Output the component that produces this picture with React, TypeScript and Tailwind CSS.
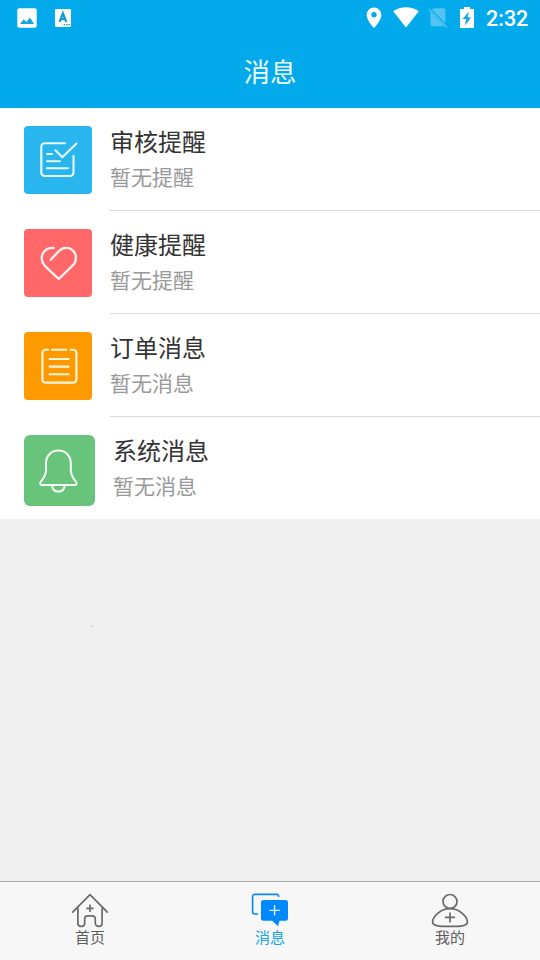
import type { ReactNode } from "react";

type Message = {
  id: number;
  title: string;
  desc: string;
  tile: string;
  icon: ReactNode;
};

const messages: Message[] = [
  {
    id: 1,
    title: "审核提醒",
    desc: "暂无提醒",
    tile: "size-[68px] rounded-[4px] bg-[#29b6ee]",
    icon: (
      <svg viewBox="0 0 68 68" className="size-full" fill="none" stroke="#e9fbff" strokeWidth="2.1" strokeLinecap="round" strokeLinejoin="round">
        <path d="M41 17.2H20.5a3.2 3.2 0 0 0-3.2 3.2v26.4a3.2 3.2 0 0 0 3.2 3.2h25.8a3.2 3.2 0 0 0 3.2-3.2V30" />
        <path d="M31.5 24.3l6.8 6.9L52.5 17.5M23 28h5M23 35.3h13M23 42.3h21" />
      </svg>
    ),
  },
  {
    id: 2,
    title: "健康提醒",
    desc: "暂无提醒",
    tile: "size-[68px] rounded-[4px] bg-[#ff6769]",
    icon: (
      <svg viewBox="0 0 68 68" className="size-full" fill="none" stroke="#fff3f1" strokeWidth="2.3" strokeLinecap="round" strokeLinejoin="round">
        <path d="M26.8 30.6L34.5 22.5C38.8 18 45 17.7 49 21.6C53 25.6 52.8 32.2 49 36.2L34.7 50L20.8 36.8C16.9 32.7 16.6 26.2 20.4 22.2C23 19.4 26 18.5 29.6 19" />
      </svg>
    ),
  },
  {
    id: 3,
    title: "订单消息",
    desc: "暂无消息",
    tile: "size-[68px] rounded-[4px] bg-[#ff9900]",
    icon: (
      <svg viewBox="0 0 68 68" className="size-full" fill="none" stroke="#fff7e0" strokeWidth="2.1" strokeLinecap="round">
        <path d="M24 17.8h-2.4a3.2 3.2 0 0 0-3.2 3.2v26.4a3.2 3.2 0 0 0 3.2 3.2h27.6a3.2 3.2 0 0 0 3.2-3.2V21a3.2 3.2 0 0 0-3.2-3.2h-2.6M28 17.8h14.4" />
        <path d="M25.6 27h19M25.6 34.6h19M25.6 42.2h19" />
      </svg>
    ),
  },
  {
    id: 4,
    title: "系统消息",
    desc: "暂无消息",
    tile: "size-[71px] rounded-[6px] bg-[#69c47b]",
    icon: (
      <svg viewBox="0 0 71 71" className="size-full" fill="none" stroke="#f8fff8" strokeWidth="2" strokeLinejoin="round">
        <path d="M34.4 15.6C27 15.6 22 21 22 28.5V35C22 40.5 19.5 43.5 16.8 46.8C15.6 48.4 16 50 18 50H50.8C52.8 50 53.2 48.4 52 46.8C49.3 43.5 46.8 40.5 46.8 35V28.5C46.8 21 41.8 15.6 34.4 15.6Z" />
        <path d="M28 50.3C28.6 54.4 31 56.6 34.4 56.6S40.2 54.4 40.8 50.3" />
      </svg>
    ),
  },
];

const tabs = [
  {
    label: "首页",
    color: "text-[#5c5c5c]",
    icon: (
      <svg viewBox="0 0 40 36" className="h-9 w-10" fill="none" stroke="#6a6a6a" strokeWidth="1.7" strokeLinejoin="round">
        <path d="M2.2 20.7L20 2.7L37.8 20.7" />
        <path d="M7.9 15.5V31.2a3.2 3.2 0 0 0 3.2 3.2h.4a3.2 3.2 0 0 0 3.2-3.2V26.8a3 3 0 0 1 3-3h4.6a3 3 0 0 1 3 3v4.4a3.2 3.2 0 0 0 3.2 3.2h.4a3.2 3.2 0 0 0 3.2-3.2V15.5" />
        <path d="M16.3 16.3h7.4M20 12.6V20" />
      </svg>
    ),
  },
  {
    label: "消息",
    color: "text-[#14a5e8]",
    icon: (
      <svg viewBox="0 0 40 36" className="h-9 w-10" fill="none">
        <path d="M28.6 5V4.4a2 2 0 0 0-2-2H4.6a2 2 0 0 0-2 2V20a2 2 0 0 0 2 2H8" stroke="#0a86f5" strokeWidth="1.6" />
        <path d="M13.5 8H35.5A2.5 2.5 0 0 1 38 10.5V26.2A2.5 2.5 0 0 1 35.5 28.7H29.5L28 34.3L22.3 28.7H13.5A2.5 2.5 0 0 1 11 26.2V10.5A2.5 2.5 0 0 1 13.5 8Z" fill="#0088ff" />
        <path d="M19.4 18.4h10.4M24.6 13.2v10.4" stroke="#e6f6ff" strokeWidth="1.4" />
      </svg>
    ),
  },
  {
    label: "我的",
    color: "text-[#5c5c5c]",
    icon: (
      <svg viewBox="0 0 40 36" className="h-9 w-10" fill="none" stroke="#6a6a6a" strokeWidth="1.7">
        <circle cx="20" cy="9.5" r="7" />
        <path d="M20 16.7C10.5 16.7 2.6 24.5 2.6 30C2.6 34.6 11.5 34.4 20 34.4S37.4 34.6 37.4 30C37.4 24.5 29.5 16.7 20 16.7Z" />
        <path d="M15 25.4h10M20 20.4v10" />
      </svg>
    ),
  },
];

const StatusBar = () => (
  <div className="flex h-9 items-center justify-between pr-3 pl-[17px]">
    <div className="flex items-center gap-[18px]">
      <svg viewBox="0 0 20 20" className="size-5">
        <rect x="0.3" y="0.3" width="19.4" height="19.4" rx="2" fill="#fff" />
        <path d="M3 16L6.8 11.2L9.4 14L13 9.4L17 16Z" fill="#16a5dc" />
      </svg>
      <svg viewBox="0 0 16 18" className="h-[18px] w-4">
        <rect width="16" height="18" rx="1" fill="#fff" />
        <path d="M4.6 12.8L7.9 4.4L11.2 12.8M5.8 10.2H10" fill="none" stroke="#159dd3" strokeWidth="2.3" />
        <path d="M8.6 15.7h1.5M11 15.7h1.5M13.4 15.7h1.5" stroke="#159dd3" strokeWidth="1.3" />
      </svg>
    </div>
    <div className="flex items-center">
      <svg viewBox="0 0 16 22" className="mr-[11px] h-[22px] w-4">
        <path d="M8 .5a7.4 7.4 0 0 0-7.4 7.4C.6 13.3 8 21 8 21s7.4-7.7 7.4-13.1A7.4 7.4 0 0 0 8 .5Zm0 10a2.7 2.7 0 1 1 0-5.4A2.7 2.7 0 0 1 8 10.5Z" fill="#fff" />
      </svg>
      <svg viewBox="0 0 26 22" className="mr-[9px] h-[22px] w-[26px]">
        <path d="M13 20.6L.2 4.2C4 1.4 8.3.2 13 .2S22 1.4 25.8 4.2Z" fill="#fff" />
      </svg>
      <svg viewBox="0 0 20 22" className="mr-3 h-[22px] w-5">
        <path d="M7 1.2h8.5a2 2 0 0 1 2 2V16.2L3.6 2.6ZM2.4 4.9L16.2 18.9a2 2 0 0 1-.7.3H4.4a2 2 0 0 1-2-2Z" fill="#52c4f2" />
        <path d="M.8 2.2L18.8 20.4" stroke="#52c4f2" strokeWidth="1.5" />
      </svg>
      <svg viewBox="0 0 14 22" className="mr-3 h-[22px] w-3.5">
        <path d="M4 0h6v2h4V21H0V2h4Z" fill="#fff" />
        <path d="M8.8 4.7L2.6 12.1H6.2L4.8 18.5L11.3 10.5H7.7Z" fill="#16a5dc" />
      </svg>
      <span className="w-[42px] pt-0.5 font-[Roboto] text-[21.5px] leading-none font-medium whitespace-nowrap text-white">2:32</span>
    </div>
  </div>
);

const MessageRow = ({ item, last }: { item: Message; last: boolean }) => (
  <li className={`flex pl-6 ${last ? "h-[102px]" : "h-[103px]"}`}>
    <div className={`mt-[18px] mr-[18px] shrink-0 ${item.tile}`}>{item.icon}</div>
    <div className={`flex-1 pt-[15px] ${last ? "" : "border-b border-[#d9d9d9]"}`}>
      <h2 className="text-2xl leading-9 text-[#333333]">{item.title}</h2>
      <p className="text-[21px] leading-[34px] text-[#999999]">{item.desc}</p>
    </div>
  </li>
);

export default function App() {
  return (
    <div className="flex h-[960px] w-[540px] flex-col overflow-hidden bg-[#efefef] font-['Noto_Sans_CJK_SC',sans-serif]">
      <header className="h-[108px] bg-[#02aaec]">
        <StatusBar />
        <h1 className="h-[72px] text-center text-[26.5px] leading-[70px] text-[#effdff]">消息</h1>
      </header>

      <ul className="bg-white">
        {messages.map((item, index) => (
          <MessageRow key={item.id} item={item} last={index === messages.length - 1} />
        ))}
      </ul>

      <main className="flex-1 pt-[107px] pl-[92px]">
        <div className="size-px bg-[#999999]" />
      </main>

      <nav className="grid h-[79px] grid-cols-3 border-t border-[#adadad] bg-[#f7f7f7]">
        {tabs.map((tab) => (
          <button key={tab.label} className={`flex flex-col items-center pt-2.5 ${tab.color}`}>
            {tab.icon}
            <span className="text-[15px] leading-[18px]">{tab.label}</span>
          </button>
        ))}
      </nav>
    </div>
  );
}
